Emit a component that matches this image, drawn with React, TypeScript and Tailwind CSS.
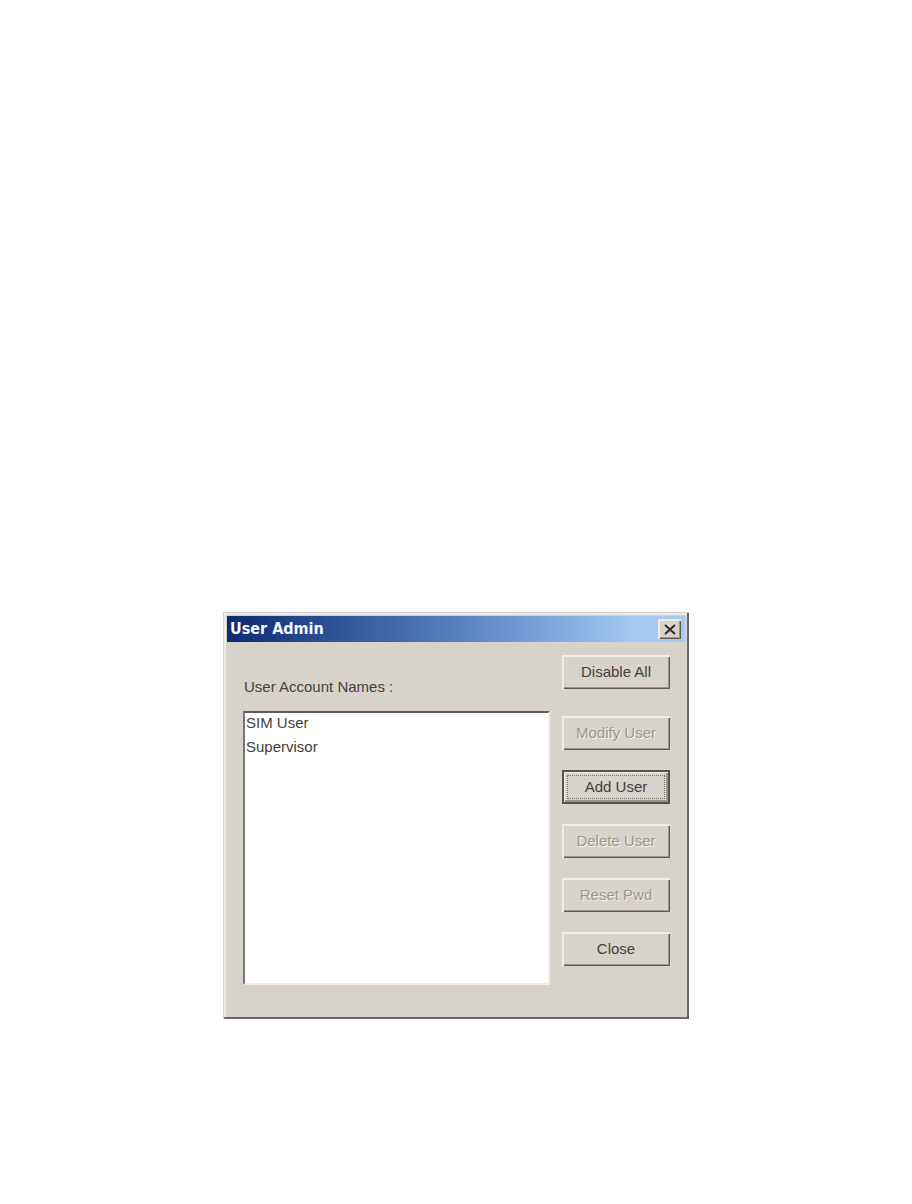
import { useState } from 'react';
import clsx from 'clsx';

type Action = {
  label: string;
  disabled?: boolean;
  isDefault?: boolean;
};

const accounts = ['SIM User', 'Supervisor'];

const actions: Action[] = [
  { label: 'Modify User', disabled: true },
  { label: 'Add User', isDefault: true },
  { label: 'Delete User', disabled: true },
  { label: 'Reset Pwd', disabled: true },
  { label: 'Close' },
];

const raised =
  'shadow-[inset_2px_2px_0_#f0ede6,inset_-1px_-1px_0_#5f5b55,inset_-2px_-2px_0_#9a968e]';

function DialogButton({ label, disabled, isDefault }: Action) {
  return (
    <button
      type="button"
      disabled={disabled}
      className={clsx(
        'flex h-[34px] w-full bg-[#d7d2ca] text-center',
        isDefault ? 'border-2 border-[#57534f] p-[3px] shadow-[inset_1px_1px_0_#f0ede6,inset_-2px_-2px_0_#9a968e]' : clsx('p-[5px]', raised),
        disabled ? 'text-[#9b978f] [text-shadow:1px_1px_0_#f5f3ee]' : 'text-[#45413d]'
      )}
    >
      <span
        className={clsx(
          'flex h-full w-full items-center justify-center border leading-5',
          isDefault ? 'border-dotted border-[#77736d]' : 'border-transparent'
        )}
      >
        {label}
      </span>
    </button>
  );
}

export default function App() {
  const [selected, setSelected] = useState<string[]>([]);

  return (
    <main className="flex min-h-screen items-start justify-center bg-white pt-[612px] font-['Liberation_Sans',Arial,sans-serif] text-[15px] text-[#45413d]">
      <section
        role="dialog"
        aria-labelledby="dialog-title"
        className="w-full max-w-[466px] bg-[#d7d2ca] p-1 shadow-[inset_1px_1px_0_#d5d2cc,inset_-2px_-2px_0_#6a6865,inset_3px_3px_0_#eeece7]"
      >
        <header className="flex h-[26px] items-center justify-between bg-linear-to-r from-[#0d2a73] via-[#5880c0] via-50% to-[#a6cbf3] to-90% pr-1 pl-[3px]">
          <h1
            id="dialog-title"
            className="font-['DejaVu_Sans_Condensed','DejaVu_Sans',sans-serif] text-base font-bold text-[#f4f6fb]"
          >
            User Admin
          </h1>
          <button
            type="button"
            aria-label="Close window"
            className={clsx('flex h-5 w-[23px] items-center justify-center bg-[#d7d2ca]', raised)}
          >
            <svg viewBox="0 0 12 11" className="h-[11px] w-3" fill="none" stroke="#2f2c29" strokeWidth="2">
              <path d="M1 1L11 10M11 1L1 10" />
            </svg>
          </button>
        </header>

        <div className="flex gap-3 pt-[13px] pr-[15px] pb-[30px] pl-4">
          <div className="flex flex-1 flex-col pt-5">
            <label htmlFor="accounts" className="px-px pb-3 leading-6">
              User Account Names :
            </label>
            <select
              id="accounts"
              multiple
              value={selected}
              onChange={(e) => setSelected(Array.from(e.target.selectedOptions, (o) => o.value))}
              className="h-[274px] w-full appearance-none overflow-hidden border-2 border-t-[#5f5c5a] border-r-[#efede9] border-b-[#efede9] border-l-[#7a7775] bg-white p-px"
            >
              {accounts.map((name) => (
                <option key={name} className="h-6 p-0 leading-6">
                  {name}
                </option>
              ))}
            </select>
          </div>

          <div className="flex w-27 flex-col gap-[27px]">
            <DialogButton label="Disable All" />
            <div className="flex flex-col gap-5">
              {actions.map((action) => (
                <DialogButton key={action.label} {...action} />
              ))}
            </div>
          </div>
        </div>
      </section>
    </main>
  );
}
